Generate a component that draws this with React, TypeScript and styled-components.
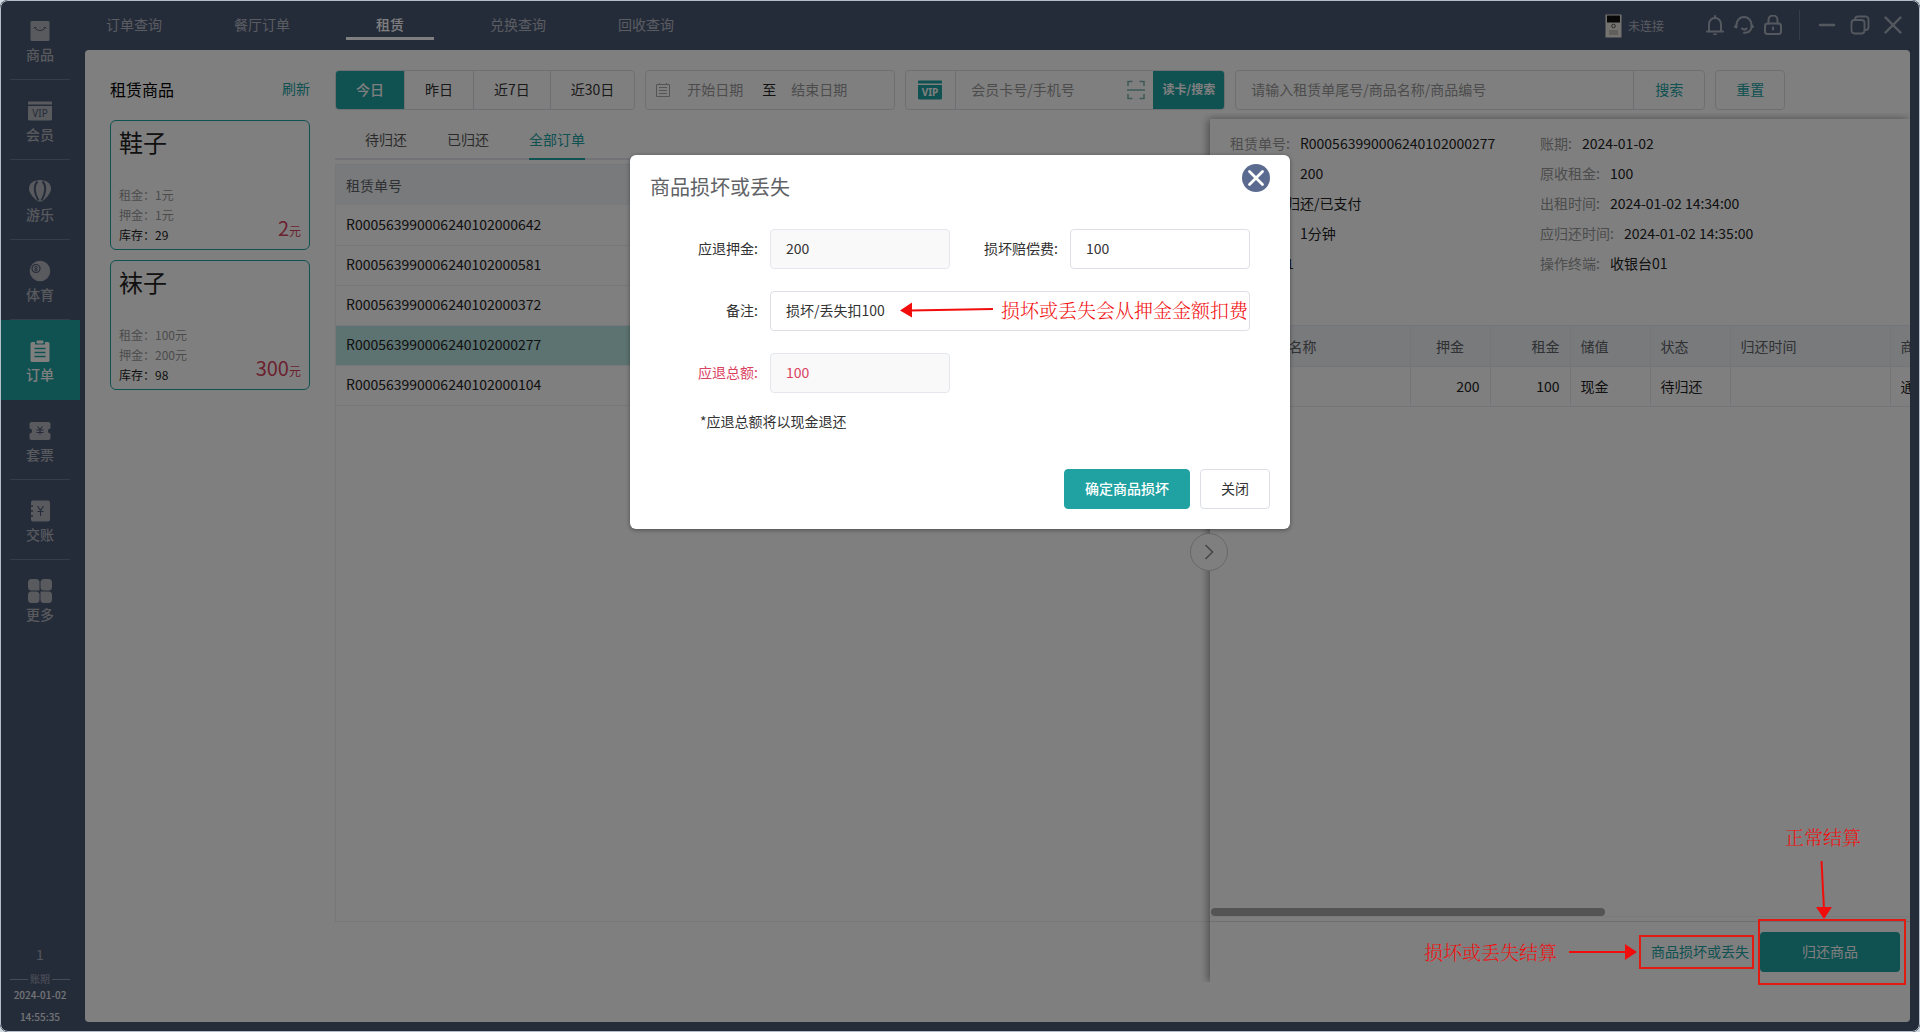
import React from "react";
import styled, { createGlobalStyle } from "styled-components";

const teal = "#20a2a3";
const navy = "#4b5873";
const line = "#dcdfe6";
const danger = "#d9435f";
const mark = "#f20d0d";
const sans = `"Noto Sans CJK SC", "Noto Sans", sans-serif`;

const GlobalStyle = createGlobalStyle`
  *, *::before, *::after { box-sizing: border-box; }
  html, body, #root { height: 100%; }
  body { margin: 0; background: #d3dae2; font-family: ${sans}; font-size: 14px; line-height: 20px; color: #222; }
  button, input { font: inherit; color: inherit; margin: 0; }
  button { background: none; border: 0; padding: 0 0 2px; cursor: pointer; white-space: nowrap; }
  input { border: 0; background: none; outline: 0; min-width: 0; padding: 0 0 2px; }
  input::placeholder { color: #999; opacity: 1; }
  a { color: inherit; text-decoration: none; }
  svg { display: block; flex: none; }
`;

const Window = styled.div`
  position: relative;
  display: flex;
  min-height: 100vh;
  background: ${navy};
  border-radius: 8px;
  overflow: hidden;
`;

const Frame = styled.div`
  position: absolute;
  inset: 0;
  border: 1px solid #b4bec9;
  border-radius: 8px;
  pointer-events: none;
`;

/* ---------- sidebar ---------- */

const Sidebar = styled.nav`
  display: flex;
  flex-direction: column;
  flex: none;
  width: 85px;
  padding-right: 5px;
`;

const SideItem = styled.a<{ $active?: boolean; $last?: boolean }>`
  display: flex;
  flex-direction: column;
  align-items: center;
  height: 80px;
  padding-top: 19px;
  gap: 1px;
  font-weight: 500;
  color: ${(p) => (p.$active ? "#fff" : "#b0b4bc")};
  background: ${(p) => (p.$active ? teal : "none")};
  &::after {
    content: "";
    width: 60px;
    height: 1px;
    margin-top: 14px;
    background: ${(p) => (p.$active || p.$last ? "transparent" : "#6d7890")};
  }
`;

const SideFoot = styled.div`
  display: flex;
  flex-direction: column;
  align-items: center;
  margin-top: auto;
  padding-bottom: 3px;
  font-size: 10px;
  font-weight: 500;
  color: #e4e7ec;
`;

const Cashier = styled.span`
  margin-bottom: 9px;
  font-size: 14px;
  font-weight: 400;
  color: #a2aabb;
`;

const PeriodLabel = styled.span`
  display: flex;
  align-items: center;
  gap: 2px;
  width: 60px;
  line-height: 12px;
  color: #8e97aa;
  &::before, &::after { content: ""; flex: 1; height: 1px; background: #8e97aa; }
`;

const Clock = styled.time`
  line-height: 24px;
`;

/* ---------- header ---------- */

const Main = styled.div`
  display: flex;
  flex-direction: column;
  flex: 1;
  min-width: 0;
  padding: 0 10px 10px 0;
`;

const Header = styled.header`
  display: flex;
  align-items: center;
  height: 50px;
  padding-left: 5px;
  color: #b4b9c4;
`;

const TopTabs = styled.nav`
  display: flex;
  gap: 40px;
`;

const TopTab = styled.a<{ $active?: boolean }>`
  width: 88px;
  height: 30px;
  line-height: 28px;
  text-align: center;
  font-weight: ${(p) => (p.$active ? 500 : 400)};
  color: ${(p) => (p.$active ? "#fff" : "#b4b9c4")};
  border-bottom: 3px solid ${(p) => (p.$active ? "#fff" : "transparent")};
`;

const Device = styled.span`
  display: flex;
  align-items: center;
  gap: 6px;
  margin-left: auto;
  padding-top: 2px;
  font-size: 12px;
`;

const HeadTools = styled.div`
  display: flex;
  gap: 8px;
  margin-left: 41px;
  padding-right: 16px;
  border-right: 1px solid #6d7890;
  height: 30px;
  align-items: center;
`;

const WinTools = styled.div`
  display: flex;
  gap: 12px;
  padding: 0 6px 0 16px;
`;

/* ---------- content ---------- */

const Content = styled.main`
  display: flex;
  flex: 1;
  background: #fff;
  border-radius: 4px;
  min-width: 0;
`;

const Goods = styled.aside`
  flex: none;
  width: 250px;
  padding: 24px 25px 0;
`;

const GoodsHead = styled.div`
  display: flex;
  align-items: center;
  justify-content: space-between;
  height: 30px;
  margin-bottom: 16px;
`;

const GoodsTitle = styled.h2`
  margin: 0;
  font-size: 16px;
  font-weight: 400;
  color: #000;
`;

const LinkButton = styled.button`
  color: ${teal};
`;

const Card = styled.article`
  display: flex;
  flex-direction: column;
  justify-content: space-between;
  height: 130px;
  margin-bottom: 10px;
  padding: 6px 8px 4px 8px;
  border: 1px solid ${teal};
  border-radius: 6px;
`;

const CardName = styled.h3`
  margin: 0;
  font-size: 24px;
  line-height: 30px;
  font-weight: 400;
`;

const CardBody = styled.div`
  display: flex;
  align-items: flex-end;
  justify-content: space-between;
  font-size: 12px;
`;

const CardLine = styled.p<{ $strong?: boolean }>`
  margin: 0;
  color: ${(p) => (p.$strong ? "#222" : "#999")};
`;

const Price = styled.span`
  font-size: 12px;
  line-height: 28px;
  color: ${danger};
  b { font-size: 20px; font-weight: 400; }
`;

const Work = styled.section`
  display: flex;
  flex-direction: column;
  flex: 1;
  min-width: 0;
  padding: 20px 0 40px;
`;

const Filters = styled.form`
  display: flex;
  gap: 10px;
  height: 40px;
`;

const Box = styled.div`
  display: flex;
  align-items: center;
  border: 1px solid ${line};
  border-radius: 4px;
  overflow: hidden;
`;

const DayButton = styled.button<{ $active?: boolean }>`
  align-self: stretch;
  padding: 0 20px 2px;
  font-weight: ${(p) => (p.$active ? 500 : 400)};
  color: ${(p) => (p.$active ? "#fff" : "#333")};
  background: ${(p) => (p.$active ? teal : "none")};
  & + & { border-left: 1px solid ${line}; }
`;

const DateBox = styled(Box)`
  width: 250px;
  padding: 0 10px;
`;

const DateInput = styled.input`
  width: 72px;
  text-align: center;
  &:first-of-type { margin-left: 9px; }
`;

const DateSep = styled.span`
  width: 32px;
  padding: 0 0 2px 4px;
  text-align: center;
`;

const MemberBox = styled(Box)`
  width: 320px;
  & > svg { margin: 0 8px; }
`;

const VipCell = styled.span`
  display: flex;
  align-items: center;
  justify-content: center;
  align-self: stretch;
  flex: none;
  width: 50px;
  padding-right: 2px;
  border-right: 1px solid ${line};
`;

const TextInput = styled.input`
  flex: 1;
  padding: 0 15px 2px;
`;

const ReadButton = styled.button`
  align-self: stretch;
  width: 71px;
  font-size: 12px;
  font-weight: 700;
  color: #fff;
  background: ${teal};
`;

const SearchBox = styled(Box)`
  flex: 0 1 470px;
`;

const SearchButton = styled.button`
  align-self: stretch;
  width: 71px;
  color: ${teal};
  border-left: 1px solid ${line};
`;

const ResetButton = styled.button`
  width: 70px;
  color: ${teal};
  border: 1px solid ${line};
  border-radius: 4px;
`;

const Board = styled.div`
  position: relative;
  display: flex;
  flex-direction: column;
  flex: 1;
  margin-top: 9px;
`;

const StatusTabs = styled.div`
  display: flex;
  gap: 40px;
  height: 41px;
  padding-left: 30px;
  box-shadow: inset 0 -2px #e4e7ed;
`;

const StatusTab = styled.button<{ $active?: boolean }>`
  color: ${(p) => (p.$active ? teal : "#555")};
  box-shadow: ${(p) => (p.$active ? `inset 0 -2px ${teal}` : "none")};
`;

const OrderPane = styled.div`
  flex: 1;
  margin: 4px 0 60px;
  border: 1px solid #ebeef5;
  border-right: 0;
`;

const OrderTable = styled.table`
  width: 100%;
  border-collapse: collapse;
  text-align: left;
  th { height: 40px; padding: 0 10px; font-weight: 400; color: #606266; background: #f1f4f9; }
`;

const OrderRow = styled.tr<{ $active?: boolean }>`
  background: ${(p) => (p.$active ? "#b8e6e2" : "none")};
  td { height: 40px; padding: 0 10px 2px; border-bottom: 1px solid #ebeef5; }
`;

/* ---------- drawer ---------- */

const DrawerWrap = styled.div`
  position: absolute;
  top: 0;
  right: 0;
  bottom: 0;
  width: 700px;
`;

const Drawer = styled.section`
  display: flex;
  flex-direction: column;
  height: 100%;
  background: #fff;
  box-shadow: -2px 0 8px rgba(0, 0, 0, 0.4);
  clip-path: inset(-6px 0 0 -14px);
`;

const Toggle = styled.button`
  position: absolute;
  top: 50%;
  left: -20px;
  display: flex;
  align-items: center;
  justify-content: center;
  width: 38px;
  height: 38px;
  margin-top: -18px;
  padding: 0;
  background: #fff;
  border: 1px solid #d0d0d0;
  border-radius: 50%;
`;

const Info = styled.dl`
  display: grid;
  grid-template-columns: 310px 1fr;
  grid-auto-rows: 30px;
  margin: 0;
  padding: 9px 20px 47px;
`;

const InfoItem = styled.div`
  display: flex;
  align-items: center;
  gap: 10px;
  dt { color: #999; }
  dd { margin: 0; }
`;

const DetailScroll = styled.div`
  flex: 1;
  display: flex;
  flex-direction: column;
  overflow: hidden;
  border-bottom: 1px solid #f2f4f8;
`;

const DetailTable = styled.table`
  table-layout: fixed;
  width: 1240px;
  border-collapse: collapse;
  text-align: left;
  th, td { padding: 0 10px; border-right: 1px solid #e6ebf3; border-bottom: 1px solid #e6ebf3; white-space: nowrap; }
  th { height: 41px; font-weight: 400; color: #606266; background: #f1f4f9; border-top: 1px solid #e6ebf3; }
  td { height: 40px; padding-bottom: 2px; }
`;

const Cell = styled.td<{ $align?: string }>`
  text-align: ${(p) => p.$align || "left"};
`;

const ScrollThumb = styled.div`
  width: 394px;
  height: 8px;
  margin: auto 0 0 1px;
  background: #a8a8a8;
  border-radius: 4px;
`;

const DrawerFoot = styled.footer`
  display: flex;
  align-items: center;
  justify-content: flex-end;
  gap: 11px;
  height: 61px;
  margin-top: 4px;
  padding-right: 10px;
  border-top: 1px solid ${line};
`;

const ReturnButton = styled.button`
  width: 140px;
  height: 40px;
  color: #fff;
  background: ${teal};
  border-radius: 4px;
`;

/* ---------- dialog ---------- */

const Mask = styled.div`
  position: absolute;
  inset: 0;
  display: flex;
  align-items: flex-start;
  justify-content: center;
  padding-top: 155px;
  background: rgba(0, 0, 0, 0.5);
`;

const Dialog = styled.div`
  width: 660px;
  padding: 9px 20px 20px;
  background: #fff;
  border-radius: 6px;
  box-shadow: 0 1px 4px rgba(0, 0, 0, 0.4);
`;

const DialogHead = styled.div`
  display: flex;
  align-items: flex-start;
  justify-content: space-between;
  height: 65px;
`;

const DialogTitle = styled.h1`
  margin: 0;
  padding-top: 9px;
  font-size: 20px;
  line-height: 28px;
  font-weight: 400;
  color: #606266;
`;

const CloseButton = styled.button`
  width: 28px;
  height: 28px;
  padding: 0;
`;

const FieldRow = styled.div`
  display: flex;
  margin-bottom: 22px;
`;

const Field = styled.div<{ $danger?: boolean; $grow?: boolean }>`
  position: relative;
  display: flex;
  align-items: center;
  width: ${(p) => (p.$grow ? "600px" : "300px")};
  color: ${(p) => (p.$danger ? danger : "#333")};
  label { width: 120px; padding: 0 12px 2px 0; text-align: right; white-space: nowrap; }
`;

const FieldInput = styled.input`
  flex: 1;
  height: 40px;
  padding: 0 15px 2px;
  border: 1px solid ${line};
  border-radius: 4px;
  &:read-only { background: #f9f9fa; border-color: #e4e7ed; }
`;

const Hint = styled.p`
  margin: -4px 0 38px;
  padding-left: 50px;
  color: #333;
`;

const DialogFoot = styled.div`
  display: flex;
  justify-content: flex-end;
  gap: 10px;
`;

const DialogButton = styled.button<{ $primary?: boolean }>`
  height: 40px;
  padding: 0 20px 2px;
  font-weight: ${(p) => (p.$primary ? 500 : 400)};
  color: ${(p) => (p.$primary ? "#fff" : "#333")};
  background: ${(p) => (p.$primary ? teal : "#fff")};
  border: 1px solid ${(p) => (p.$primary ? teal : line)};
  border-radius: 4px;
`;

/* ---------- red guide marks ---------- */

const NoteText = styled.span`
  font-family: SimSun, "Noto Serif CJK SC", ${sans};
  font-size: 19px;
  line-height: 24px;
  font-weight: 300;
  color: ${mark};
  white-space: nowrap;
`;

const FieldNote = styled.div`
  position: absolute;
  right: 2px;
  display: flex;
  align-items: center;
  gap: 8px;
  padding-bottom: 2px;
  pointer-events: none;
`;

const Guide = styled.div`
  position: absolute;
  right: 14px;
  bottom: 47px;
  display: grid;
  grid-template-columns: auto 148px;
  column-gap: 4px;
  align-items: center;
  pointer-events: none;
`;

const GuideTop = styled.div`
  grid-column: 2;
  display: flex;
  flex-direction: column;
  align-items: center;
  gap: 12px;
  padding-right: 18px;
`;

const GuideSide = styled.div`
  display: flex;
  align-items: center;
  gap: 12px;
`;

const Outline = styled.div<{ $w: number; $h: number }>`
  width: ${(p) => p.$w}px;
  height: ${(p) => p.$h}px;
  margin-left: ${(p) => (p.$w < 140 ? "-10px" : "0")};
  border: 2px solid #e31a12;
`;

/* ---------- icons ---------- */

const cut = navy;

function GoodsIcon() {
  return (
    <svg width="24" height="24" viewBox="0 0 24 24">
      <rect x="2.5" y="2" width="19" height="20" rx="1.5" fill="currentColor" />
      <path d="M7 8.5C8 12.500 16 12.500 17 8.5" fill="none" stroke={cut} strokeWidth="1" />
      <path d="M5.500 9.500 7 8l1.500 1M15.500 9 17 8l1.500 1.500" fill="none" stroke={cut} strokeWidth="0.900" />
    </svg>
  );
}

function VipIcon({ color = "currentColor", text = cut, bold = false }: { color?: string; text?: string; bold?: boolean }) {
  return (
    <svg width="26" height="24" viewBox="0 0 26 24">
      <path d="M2 2.500h22a1 1 0 0 1 1 1V5.500H1V3.500a1 1 0 0 1 1-1z" fill={color} />
      <path d="M1 7h24v13a1.500 1.500 0 0 1-1.500 1.500h-21A1.500 1.500 0 0 1 1 20z" fill={color} />
      <text x="13" y="18" fontSize="10" fontWeight={bold ? 700 : 400} fontFamily="Noto Sans" textAnchor="middle" fill={text}>VIP</text>
    </svg>
  );
}

function BalloonIcon() {
  return (
    <svg width="24" height="24" viewBox="0 0 24 24">
      <path d="M12 1C5.500 1 1 4.500 1 9.500 1 15 7 20 10 22.500h4C17 20 23 15 23 9.500 23 4.500 18.500 1 12 1z" fill="currentColor" />
      <path d="M9.500 2.500C5.500 6.500 6 14 10.500 21.500M14.500 2.500C18.500 6.500 18 14 13.500 21.500" fill="none" stroke={cut} strokeWidth="2" />
    </svg>
  );
}

function BallIcon() {
  return (
    <svg width="24" height="24" viewBox="0 0 24 24">
      <circle cx="12" cy="12" r="10.300" fill="currentColor" />
      <circle cx="8" cy="9.500" r="4" fill="none" stroke={cut} strokeWidth="1.200" />
      <circle cx="8" cy="8.400" r="1.200" fill="none" stroke={cut} strokeWidth="1" />
      <circle cx="8" cy="10.800" r="1.200" fill="none" stroke={cut} strokeWidth="1" />
    </svg>
  );
}

function OrderIcon() {
  return (
    <svg width="24" height="24" viewBox="0 0 24 24">
      <path d="M4 3h3v2.500h10V3h3a1.500 1.500 0 0 1 1.500 1.500v17A1.500 1.500 0 0 1 20 23H4a1.500 1.500 0 0 1-1.500-1.500v-17A1.500 1.500 0 0 1 4 3z" fill="currentColor" />
      <rect x="8.500" y="1.500" width="7" height="3" rx="1" fill="currentColor" />
      <path d="M6.500 9.500h11M6.500 13.500h11M6.500 17.500h11" stroke={teal} strokeWidth="1.500" />
    </svg>
  );
}

function TicketIcon() {
  return (
    <svg width="24" height="24" viewBox="0 0 24 24">
      <path d="M3.500 3h17a2 2 0 0 1 2 2v4.500a2.500 2.500 0 0 0 0 5V19a2 2 0 0 1-2 2h-17a2 2 0 0 1-2-2v-4.500a2.500 2.500 0 0 0 0-5V5a2 2 0 0 1 2-2z" fill="currentColor" />
      <path d="M9.500 7.500l2.500 3 2.500-3M12 10.500v5M8.500 11h7M8.500 13.500h7" fill="none" stroke={cut} strokeWidth="1.100" />
    </svg>
  );
}

function LedgerIcon() {
  return (
    <svg width="24" height="24" viewBox="0 0 24 24">
      <rect x="3" y="1.500" width="19" height="21" rx="2" fill="currentColor" />
      <path d="M2 7h3M2 12h3M2 17h3" stroke={cut} strokeWidth="1.400" />
      <path d="M9.500 7l3 4.500 3-4.500M12.500 11.500V17M9.500 12.500h6" fill="none" stroke={cut} strokeWidth="1.100" />
    </svg>
  );
}

function MoreIcon() {
  return (
    <svg width="26" height="24" viewBox="0 0 26 24">
      <g fill="currentColor">
        <path d="M4.500 0H9a3.500 3.500 0 0 1 3.500 3.500V11.500H4.500A3.500 3.500 0 0 1 1 8V3.500A3.500 3.500 0 0 1 4.500 0z" />
        <rect x="13.500" y="0" width="11.500" height="11.500" rx="3.500" />
        <rect x="1" y="12.500" width="11.500" height="11.500" rx="3.500" />
        <path d="M13.500 12.500h8A3.500 3.500 0 0 1 25 16v4.500a3.500 3.500 0 0 1-3.500 3.500H17a3.500 3.500 0 0 1-3.500-3.500z" />
      </g>
    </svg>
  );
}

function DeviceIcon() {
  return (
    <svg width="17" height="24" viewBox="0 0 17 24">
      <rect x="0.500" y="0.500" width="16" height="23" fill="#e8e6df" />
      <rect x="2" y="1.500" width="13" height="7" fill="#111" />
      <circle cx="8.500" cy="12" r="1.800" fill="none" stroke="#555" />
      <rect x="4" y="16" width="9" height="5" fill="#c2bfb6" />
    </svg>
  );
}

function StrokeIcon({ children, width = 2 }: { children: React.ReactNode; width?: number }) {
  return (
    <svg width="20" height="20" viewBox="0 0 20 20" fill="none" stroke="currentColor" strokeWidth={width} strokeLinecap="round" strokeLinejoin="round">
      {children}
    </svg>
  );
}

const IconButton = styled.button<{ $w: number }>`
  display: flex;
  justify-content: center;
  width: ${(p) => p.$w}px;
  padding: 0;
  color: #a9b0be;
`;

/* ---------- data ---------- */

const sideItems = [
  { name: "商品", icon: <GoodsIcon /> },
  { name: "会员", icon: <VipIcon /> },
  { name: "游乐", icon: <BalloonIcon /> },
  { name: "体育", icon: <BallIcon /> },
  { name: "订单", icon: <OrderIcon /> },
  { name: "套票", icon: <TicketIcon /> },
  { name: "交账", icon: <LedgerIcon /> },
  { name: "更多", icon: <MoreIcon /> },
];

const topTabs = ["订单查询", "餐厅订单", "租赁", "兑换查询", "回收查询"];

const goods = [
  { name: "鞋子", rent: 1, deposit: 1, stock: 29 },
  { name: "袜子", rent: 100, deposit: 200, stock: 98 },
];

const orders = [
  "R000563990006240102000642",
  "R000563990006240102000581",
  "R000563990006240102000372",
  "R000563990006240102000277",
  "R000563990006240102000104",
];

const info = [
  ["租赁单号", "R000563990006240102000277"],
  ["账期", "2024-01-02"],
  ["原收押金", "200"],
  ["原收租金", "100"],
  ["状态", "待归还/已支付"],
  ["出租时间", "2024-01-02 14:34:00"],
  ["租赁时长", "1分钟"],
  ["应归还时间", "2024-01-02 14:35:00"],
  ["操作员", "1"],
  ["操作终端", "收银台01"],
];

const columns = [
  { title: "", width: 40, value: "1" },
  { title: "商品名称", width: 160, value: "袜子" },
  { title: "押金", width: 80, value: "200", head: "center", align: "right" },
  { title: "租金", width: 80, value: "100", head: "right", align: "right" },
  { title: "储值", width: 80, value: "现金" },
  { title: "状态", width: 80, value: "待归还" },
  { title: "归还时间", width: 160, value: "" },
  { title: "商品类型", width: 560, value: "通用" },
];

export default function App() {
  return (
    <>
      <GlobalStyle />
      <Window>
        <Sidebar>
          {sideItems.map((s, i) => (
            <SideItem key={s.name} href="#" $active={s.name === "订单"} $last={i === sideItems.length - 1}>
              {s.icon}
              {s.name}
            </SideItem>
          ))}
          <SideFoot>
            <Cashier>1</Cashier>
            <PeriodLabel>账期</PeriodLabel>
            <time>2024-01-02</time>
            <Clock>14:55:35</Clock>
          </SideFoot>
        </Sidebar>

        <Main>
          <Header>
            <TopTabs>
              {topTabs.map((t) => (
                <TopTab key={t} href="#" $active={t === "租赁"}>{t}</TopTab>
              ))}
            </TopTabs>
            <Device>
              <DeviceIcon />
              未连接
            </Device>
            <HeadTools>
              <IconButton $w={20} aria-label="消息">
                <StrokeIcon>
                  <path d="M10 1v1.500M2 16.500h16M4 16.500V9a6 6 0 0 1 12 0v7.500M9 19.500h2" />
                </StrokeIcon>
              </IconButton>
              <IconButton $w={22} aria-label="客服">
                <StrokeIcon>
                  <path d="M2.500 12.500V9.500a7.500 7.500 0 0 1 15 0V12a6 6 0 0 1-5 5.500M2.500 9.500 1 12M17.500 9.500 19 12M8 13.500c1.500 1.200 3.500 1.200 4.500 0M10 17.800h2" />
                </StrokeIcon>
              </IconButton>
              <IconButton $w={20} aria-label="锁屏">
                <StrokeIcon>
                  <rect x="2" y="8.500" width="16" height="10.500" rx="2.500" />
                  <path d="M5.500 8.500V5a4.500 4.500 0 0 1 9 0v3.500M10 12.500v2" />
                </StrokeIcon>
              </IconButton>
            </HeadTools>
            <WinTools>
              <IconButton $w={22} aria-label="最小化">
                <StrokeIcon width={2.4}><path d="M3 10h14" /></StrokeIcon>
              </IconButton>
              <IconButton $w={20} aria-label="还原">
                <StrokeIcon width={1.8}>
                  <rect x="1.500" y="5" width="13" height="13.500" rx="3" />
                  <path d="M5 4.500a3 3 0 0 1 2.500-3H15A3 3 0 0 1 18.500 4.500V12a3 3 0 0 1-3 3" />
                </StrokeIcon>
              </IconButton>
              <IconButton $w={22} aria-label="关闭窗口">
                <StrokeIcon width={2.4}><path d="M2.500 2.500l15 15M17.500 2.500l-15 15" /></StrokeIcon>
              </IconButton>
            </WinTools>
          </Header>

          <Content>
            <Goods>
              <GoodsHead>
                <GoodsTitle>租赁商品</GoodsTitle>
                <LinkButton>刷新</LinkButton>
              </GoodsHead>
              {goods.map((g) => (
                <Card key={g.name}>
                  <CardName>{g.name}</CardName>
                  <CardBody>
                    <div>
                      <CardLine>租金：{g.rent}元</CardLine>
                      <CardLine>押金：{g.deposit}元</CardLine>
                      <CardLine $strong>库存：{g.stock}</CardLine>
                    </div>
                    <Price><b>{g.rent + g.deposit}</b>元</Price>
                  </CardBody>
                </Card>
              ))}
            </Goods>

            <Work>
              <Filters onSubmit={(e) => e.preventDefault()}>
                <Box>
                  <DayButton type="button" $active>今日</DayButton>
                  <DayButton type="button">昨日</DayButton>
                  <DayButton type="button">近7日</DayButton>
                  <DayButton type="button">近30日</DayButton>
                </Box>
                <DateBox>
                  <svg width="14" height="16" viewBox="0 0 14 16" fill="none" stroke="#aaa">
                    <path d="M.5 2.500h13v12H.5zM3 5.500h8M3 8.500h8M3 11.500h8M3.500 1v2M10.500 1v2" />
                  </svg>
                  <DateInput placeholder="开始日期" aria-label="开始日期" />
                  <DateSep>至</DateSep>
                  <DateInput placeholder="结束日期" aria-label="结束日期" />
                </DateBox>
                <MemberBox>
                  <VipCell><VipIcon color={teal} text="#fff" bold /></VipCell>
                  <TextInput placeholder="会员卡号/手机号" aria-label="会员卡号/手机号" />
                  <svg width="18" height="20" viewBox="0 0 18 20" fill="none" stroke="#7db5ae" strokeWidth="1.500">
                    <path d="M1 6V1.500h4.500M12.500 1.500H17V6M1 14v4.500h4.500M12.500 18.500H17V14M0 10h18" />
                  </svg>
                  <ReadButton type="button">读卡/搜索</ReadButton>
                </MemberBox>
                <SearchBox>
                  <TextInput placeholder="请输入租赁单尾号/商品名称/商品编号" aria-label="请输入租赁单尾号/商品名称/商品编号" />
                  <SearchButton>搜索</SearchButton>
                </SearchBox>
                <ResetButton type="reset">重置</ResetButton>
              </Filters>

              <Board>
                <StatusTabs>
                  <StatusTab>待归还</StatusTab>
                  <StatusTab>已归还</StatusTab>
                  <StatusTab $active>全部订单</StatusTab>
                </StatusTabs>
                <OrderPane>
                  <OrderTable>
                    <thead>
                      <tr><th>租赁单号</th></tr>
                    </thead>
                    <tbody>
                      {orders.map((o) => (
                        <OrderRow key={o} $active={o.endsWith("277")}>
                          <td>{o}</td>
                        </OrderRow>
                      ))}
                    </tbody>
                  </OrderTable>
                </OrderPane>

                <DrawerWrap>
                  <Drawer>
                    <Info>
                      {info.map(([k, v]) => (
                        <InfoItem key={k}>
                          <dt>{k}:</dt>
                          <dd>{v}</dd>
                        </InfoItem>
                      ))}
                    </Info>
                    <DetailScroll>
                      <DetailTable>
                        <colgroup>
                          {columns.map((c) => <col key={c.title} width={c.width} />)}
                        </colgroup>
                        <thead>
                          <tr>
                            {columns.map((c) => <Cell as="th" key={c.title} $align={c.head}>{c.title}</Cell>)}
                          </tr>
                        </thead>
                        <tbody>
                          <tr>
                            {columns.map((c) => <Cell key={c.title} $align={c.align}>{c.value}</Cell>)}
                          </tr>
                        </tbody>
                      </DetailTable>
                      <ScrollThumb />
                    </DetailScroll>
                    <DrawerFoot>
                      <LinkButton>商品损坏或丢失</LinkButton>
                      <ReturnButton>归还商品</ReturnButton>
                    </DrawerFoot>
                  </Drawer>
                  <Toggle aria-label="收起">
                    <svg width="10" height="16" viewBox="0 0 10 16" fill="none" stroke="#888" strokeWidth="1.500">
                      <path d="M1.500 1 8.500 8l-7 7" />
                    </svg>
                  </Toggle>
                </DrawerWrap>
              </Board>
            </Work>
          </Content>
        </Main>

        <Mask>
          <Dialog role="dialog" aria-labelledby="dialog-title">
            <DialogHead>
              <DialogTitle id="dialog-title">商品损坏或丢失</DialogTitle>
              <CloseButton aria-label="关闭弹窗">
                <svg width="28" height="28" viewBox="0 0 28 28">
                  <circle cx="14" cy="14" r="14" fill="#5b6b90" />
                  <path d="M7.500 7.500l13 13M20.500 7.500l-13 13" stroke="#fff" strokeWidth="2.800" strokeLinecap="round" />
                </svg>
              </CloseButton>
            </DialogHead>
            <FieldRow>
              <Field>
                <label htmlFor="deposit">应退押金:</label>
                <FieldInput id="deposit" readOnly value="200" />
              </Field>
              <Field>
                <label htmlFor="fee">损坏赔偿费:</label>
                <FieldInput id="fee" defaultValue="100" />
              </Field>
            </FieldRow>
            <FieldRow>
              <Field $grow>
                <label htmlFor="remark">备注:</label>
                <FieldInput id="remark" defaultValue="损坏/丢失扣100" />
                <FieldNote>
                  <svg width="93" height="16" viewBox="0 0 93 16">
                    <path d="M93 7 10 8.500" stroke={mark} strokeWidth="2" />
                    <path d="M0 8.500 12 .5v15z" fill={mark} />
                  </svg>
                  <NoteText>损坏或丢失会从押金金额扣费</NoteText>
                </FieldNote>
              </Field>
            </FieldRow>
            <FieldRow>
              <Field $danger>
                <label htmlFor="total">应退总额:</label>
                <FieldInput id="total" readOnly value="100" />
              </Field>
            </FieldRow>
            <Hint>*应退总额将以现金退还</Hint>
            <DialogFoot>
              <DialogButton $primary>确定商品损坏</DialogButton>
              <DialogButton>关闭</DialogButton>
            </DialogFoot>
          </Dialog>
        </Mask>

        <Guide>
          <GuideTop>
            <NoteText>正常结算</NoteText>
            <svg width="18" height="58" viewBox="0 0 18 58">
              <path d="M7.500 0 10 48" stroke={mark} strokeWidth="2" />
              <path d="M2 46h16l-8 12z" fill={mark} />
            </svg>
          </GuideTop>
          <GuideSide>
            <NoteText>损坏或丢失结算</NoteText>
            <svg width="68" height="16" viewBox="0 0 68 16">
              <path d="M0 8h58" stroke={mark} strokeWidth="2" />
              <path d="M68 8 56 0v16z" fill={mark} />
            </svg>
            <Outline $w={115} $h={34} />
          </GuideSide>
          <Outline $w={148} $h={66} />
        </Guide>
        <Frame />
      </Window>
    </>
  );
}
